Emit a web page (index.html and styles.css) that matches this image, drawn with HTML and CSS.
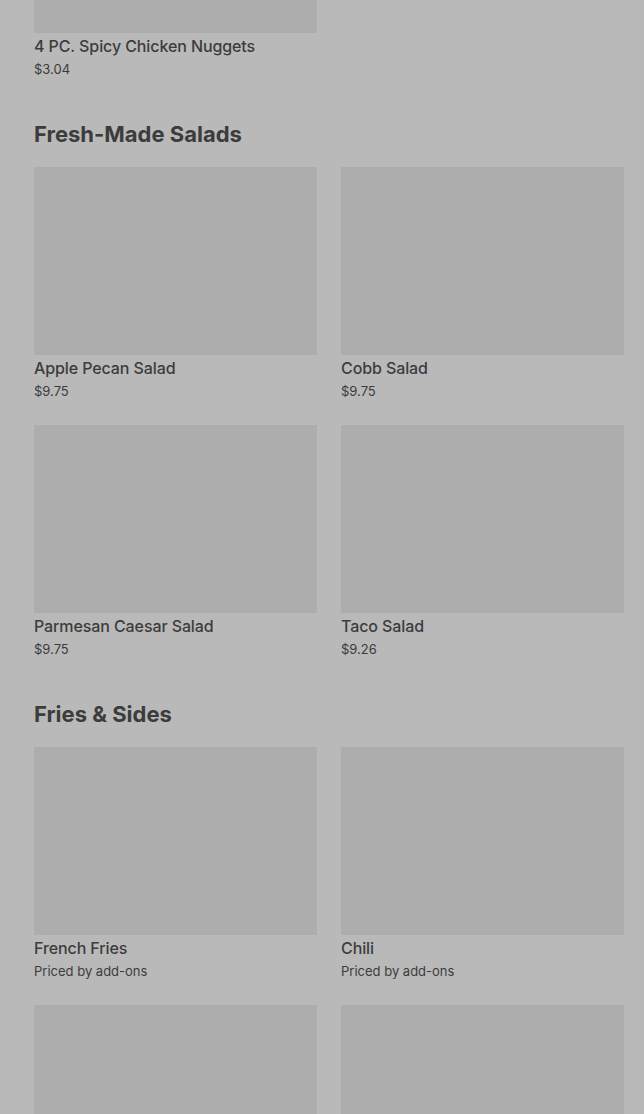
FILE: index.html
```html
<!DOCTYPE html>
<html lang="en">
  <head>
    <meta charset="UTF-8" />
    <meta name="viewport" content="width=device-width, initial-scale=1.0" />
    <title>Menu</title>
    <link rel="stylesheet" href="styles.css">
  </head>
  <body>
    <div class="menu">
      <section class="menu-section first">
        <div class="item-grid">
          <div class="item">
            <div class="item-image"></div>
            <div class="item-name">4 PC. Spicy Chicken Nuggets</div>
            <div class="item-price">$3.04</div>
          </div>
        </div>
      </section>

      <section class="menu-section">
        <h2>Fresh-Made Salads</h2>
        <div class="item-grid">
          <div class="item">
            <div class="item-image"></div>
            <div class="item-name">Apple Pecan Salad</div>
            <div class="item-price">$9.75</div>
          </div>
          <div class="item">
            <div class="item-image"></div>
            <div class="item-name">Cobb Salad</div>
            <div class="item-price">$9.75</div>
          </div>
          <div class="item">
            <div class="item-image"></div>
            <div class="item-name">Parmesan Caesar Salad</div>
            <div class="item-price">$9.75</div>
          </div>
          <div class="item">
            <div class="item-image"></div>
            <div class="item-name">Taco Salad</div>
            <div class="item-price">$9.26</div>
          </div>
        </div>
      </section>

      <section class="menu-section">
        <h2>Fries &amp; Sides</h2>
        <div class="item-grid">
          <div class="item">
            <div class="item-image"></div>
            <div class="item-name">French Fries</div>
            <div class="item-price">Priced by add-ons</div>
          </div>
          <div class="item">
            <div class="item-image"></div>
            <div class="item-name">Chili</div>
            <div class="item-price">Priced by add-ons</div>
          </div>
          <div class="item">
            <div class="item-image"></div>
          </div>
          <div class="item">
            <div class="item-image"></div>
          </div>
        </div>
      </section>
    </div>
  </body>
</html>
```

FILE: styles.css
```css
html, body {
  height: 100%;
  overflow: hidden;
}

body {
  font-family: Inter, "Noto Sans", sans-serif;
  background-color: #b9b9b9;
  color: #3c3c3c;
  margin: 0;
  padding: 0;
}

.menu {
  /* page is scrolled, first card image is mostly off the top */
  margin-top: -155px;
  padding: 0 20px 0 34px;
}

.menu-section {
  padding-top: 41px;
}

.menu-section.first {
  padding-top: 0;
}

h2 {
  font-size: 22px;
  font-weight: 700;
  line-height: 28px;
  margin: 0 0 19px;
}

.item-grid {
  display: grid;
  grid-template-columns: 1fr 1fr;
  column-gap: 24px;
  row-gap: 24px;
}

.item-image {
  height: 188px;
  background-color: #adadad;
  margin-bottom: 3px;
}

.item-name {
  font-size: 16px;
  font-weight: 500;
  line-height: 20px;
  letter-spacing: -0.1px;
}

.item-price {
  font-size: 13px;
  line-height: 20px;
  margin-top: 3px;
}
```
